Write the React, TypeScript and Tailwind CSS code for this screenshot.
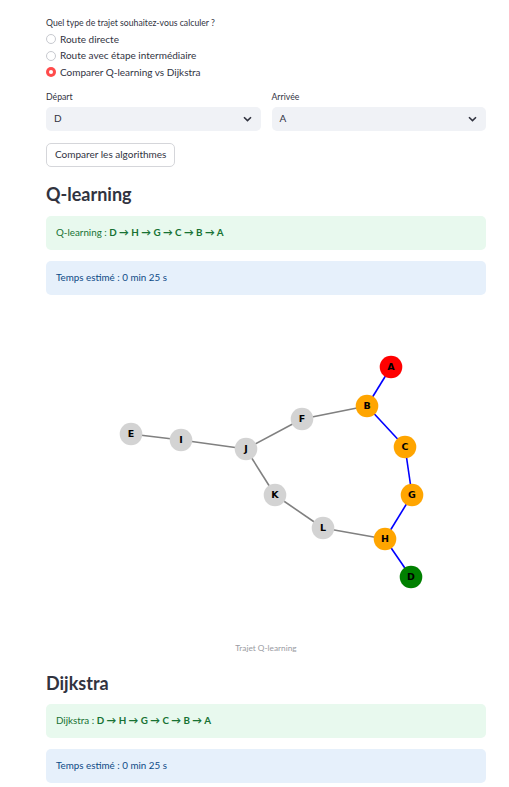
import React from "react";

const nodes: Record<string, { x: number; y: number; fill: string }> = {
  A: { x: 391, y: 367, fill: "#ff0000" },
  B: { x: 367, y: 406, fill: "#ffa500" },
  C: { x: 405, y: 447, fill: "#ffa500" },
  G: { x: 412, y: 495, fill: "#ffa500" },
  H: { x: 385, y: 539, fill: "#ffa500" },
  D: { x: 411, y: 577, fill: "#008000" },
  L: { x: 323, y: 528, fill: "#d3d3d3" },
  K: { x: 275, y: 495, fill: "#d3d3d3" },
  J: { x: 246, y: 449, fill: "#d3d3d3" },
  F: { x: 302, y: 419, fill: "#d3d3d3" },
  I: { x: 181, y: 440, fill: "#d3d3d3" },
  E: { x: 131, y: 434, fill: "#d3d3d3" },
};

const edges: [string, string, boolean][] = [
  ["E", "I", false],
  ["I", "J", false],
  ["J", "F", false],
  ["F", "B", false],
  ["J", "K", false],
  ["K", "L", false],
  ["L", "H", false],
  ["A", "B", true],
  ["B", "C", true],
  ["C", "G", true],
  ["G", "H", true],
  ["H", "D", true],
];

const OX = 46;
const OY = 300;

function Graph() {
  return (
    <svg width={440} height={340} viewBox="0 0 440 340" className="block">
      {edges.map(([a, b, blue], i) => (
        <line
          key={i}
          x1={nodes[a].x - OX}
          y1={nodes[a].y - OY}
          x2={nodes[b].x - OX}
          y2={nodes[b].y - OY}
          stroke={blue ? "#0000ff" : "#808080"}
          strokeWidth={1.6}
        />
      ))}
      {Object.entries(nodes).map(([k, n]) => (
        <g key={k}>
          <circle cx={n.x - OX} cy={n.y - OY} r={11.3} fill={n.fill} />
          <text
            x={n.x - OX}
            y={n.y - OY + 3.3}
            textAnchor="middle"
            fontSize={9.5}
            fontWeight={700}
            fontFamily="'DejaVu Sans', sans-serif"
            fill="#000"
          >
            {k}
          </text>
        </g>
      ))}
    </svg>
  );
}

function Radio({ label, checked }: { label: string; checked?: boolean }) {
  return (
    <div className="flex items-center h-[16.5px] gap-[4px]">
      {checked ? (
        <span className="w-[10px] h-[10px] rounded-full bg-[#ff4b4b] flex items-center justify-center">
          <span className="w-[4px] h-[4px] rounded-full bg-white" />
        </span>
      ) : (
        <span className="w-[10px] h-[10px] rounded-full border border-[#c7c9cf] bg-white" />
      )}
      <span className="text-[10px] text-[#31333f]">{label}</span>
    </div>
  );
}

function Select({ label, value }: { label: string; value: string }) {
  return (
    <div className="flex-1 flex flex-col">
      <div className="text-[8.7px] text-[#31333f] h-[14px] leading-[14px] mb-[3px]">{label}</div>
      <div className="h-[24px] rounded-[5px] bg-[#f0f2f6] flex items-center justify-between pl-[8px] pr-[9px]">
        <span className="text-[10px] text-[#31333f]">{value}</span>
        <svg width="9" height="6" viewBox="0 0 9 6">
          <path d="M1 1.2 L4.5 4.6 L8 1.2" fill="none" stroke="#31333f" strokeWidth="1.6" />
        </svg>
      </div>
    </div>
  );
}

function Section({ name }: { name: string }) {
  return (
    <>
      <div className="rounded-[5px] bg-[#e8f9ee] h-[34px] flex items-center px-[10px] text-[9.8px] text-[#177233]">
        <span>{name} :&nbsp;</span>
        <span className="font-bold">D → H → G → C → B → A</span>
      </div>
      <div className="rounded-[5px] bg-[#e6f0fb] h-[34px] flex items-center px-[10px] text-[9.8px] text-[#0d4a86] mt-[11px]">
        Temps estimé : 0 min 25 s
      </div>
    </>
  );
}

export default function App() {
  return (
    <div
      className="w-[509px] h-[787px] bg-white overflow-hidden pl-[46px] pr-[23px] pt-[1px]"
      style={{ fontFamily: "Lato, 'Noto Sans', sans-serif" }}
    >
      <div className="pt-[16px] text-[8.7px] text-[#31333f] h-[30px] leading-[12px]">
        Quel type de trajet souhaitez-vous calculer ?
      </div>
      <div className="flex flex-col">
        <Radio label="Route directe" />
        <Radio label="Route avec étape intermédiaire" />
        <Radio label="Comparer Q-learning vs Dijkstra" checked />
      </div>
      <div className="flex gap-[11px] mt-[9px]">
        <Select label="Départ" value="D" />
        <Select label="Arrivée" value="A" />
      </div>
      <button className="mt-[12px] h-[24px] px-[8px] rounded-[5px] border border-[#d5d6da] bg-white text-[10px] text-[#31333f]">
        Comparer les algorithmes
      </button>
      <div className="mt-[16px] h-[23px] text-[18px] font-bold text-[#31333f] leading-[23px]">Q-learning</div>
      <div className="mt-[10px]">
        <Section name="Q-learning" />
      </div>
      <div className="mt-[5px]">
        <Graph />
      </div>
      <div className="text-center text-[8.3px] text-[#9a9ba2] h-[16px] leading-[16px]">Trajet Q-learning</div>
      <div className="mt-[16px] h-[23px] text-[18px] font-bold text-[#31333f] leading-[23px]">Dijkstra</div>
      <div className="mt-[9px]">
        <Section name="Dijkstra" />
      </div>
    </div>
  );
}
